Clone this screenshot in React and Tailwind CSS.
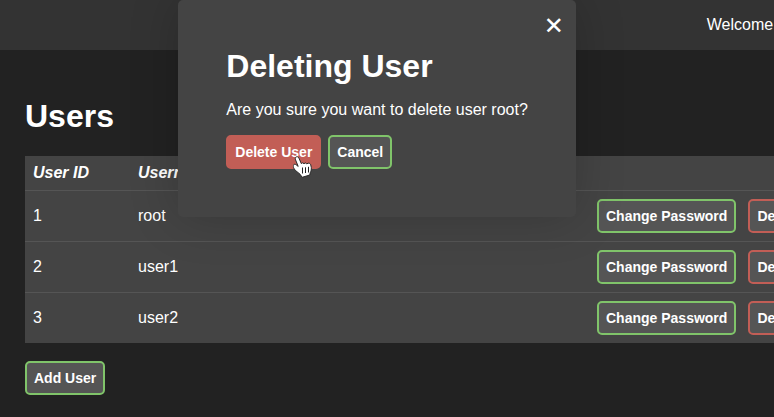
const users = [
  { id: 1, name: "root" },
  { id: 2, name: "user1" },
  { id: 3, name: "user2" },
];

const tones = {
  green: "border-[#80c46a] bg-[#555]",
  red: "border-[#c25e56] bg-[#555]",
  solidRed: "border-[#c25e56] bg-[#c25e56]",
};

function Button({ tone = "green", children }) {
  return (
    <button
      className={`h-[34px] shrink-0 whitespace-nowrap rounded-[5px] border-2 px-[7px] text-[14px] leading-[16px] font-bold text-white ${tones[tone]}`}
    >
      {children}
    </button>
  );
}

function PointerCursor() {
  return (
    <svg className="absolute left-[293px] top-[156px]" width="20" height="22" viewBox="0 0 20 22">
      <path
        d="M2.800 1.200C3.900.300 5.300.700 5.900 2L8.300 7.600 9.600 6.800 11 7.700 12.300 6.900 13.800 7.800 15.300 7.200C16.500 7.100 17.300 7.700 17.700 8.700L18.300 11.500C18.500 13.500 18 15.200 17.200 16.800L16.800 19 9.200 21.300 7 18.200 2.200 14.200C.700 12.500 0 10.500.300 9.300.800 8 2.200 8 3.300 8.900L5.200 10.400 2.600 4C2.200 2.800 2.200 1.800 2.800 1.200z"
        fill="#fff"
        stroke="#2b2b2b"
        strokeWidth="1"
        strokeLinejoin="round"
      />
      <path d="M9.500 11.500v6M12.500 11.300v5.700M15.500 10.800v5.700" stroke="#222" strokeWidth="1" fill="none" />
    </svg>
  );
}

function DeleteDialog() {
  return (
    <div
      role="dialog"
      className="absolute left-[178.300px] top-0 h-[217px] w-[397.400px] rounded-[5px] bg-[#444] px-12 pt-12 shadow-[0_0_50px_rgba(0,0,0,0.2)]"
    >
      <button
        aria-label="Close"
        className="absolute right-[12px] top-[14px] flex h-6 w-5 items-center justify-center font-['DejaVu_Sans',sans-serif] text-[24px] leading-[24px]"
      >
        ✕
      </button>
      <h2 className="text-[32px] leading-[36px] font-bold">Deleting User</h2>
      <p className="mt-[17px] whitespace-nowrap leading-[18px]">
        Are you sure you want to delete user root?
      </p>
      <div className="mt-4 flex gap-[7px]">
        <Button tone="solidRed">Delete User</Button>
        <Button>Cancel</Button>
      </div>
    </div>
  );
}

export default function App() {
  return (
    <div className="relative h-[417px] w-[774px] overflow-hidden bg-[#222] font-['Liberation_Sans',Arial,sans-serif] text-[16px] text-white">
      <header className="flex h-[50px] items-center bg-[#333] pl-[706.800px]">
        <span className="leading-[18px]">Welcome</span>
      </header>
      <main className="pl-[25px] pt-12">
        <h1 className="text-[32px] leading-[36px] font-bold">Users</h1>
        <div className="mt-[22px] w-[900px] bg-[#444]">
          <div className="flex h-[35px] items-center border-b border-[#555] pl-2 leading-[18px] font-bold italic">
            <span className="w-[105px]">User ID</span>
            <span>Username</span>
          </div>
          {users.map((user) => (
            <div
              key={user.id}
              className="flex h-[51px] items-center border-b border-[#555] pl-2 leading-[18px] last:h-[50px] last:border-b-0"
            >
              <span className="w-[105px]">{user.id}</span>
              <span className="w-[459px]">{user.name}</span>
              <div className="flex gap-3">
                <Button>Change Password</Button>
                <Button tone="red">Delete User</Button>
              </div>
            </div>
          ))}
        </div>
        <div className="mt-[18px] flex">
          <Button>Add User</Button>
        </div>
      </main>
      <DeleteDialog />
      <PointerCursor />
    </div>
  );
}
